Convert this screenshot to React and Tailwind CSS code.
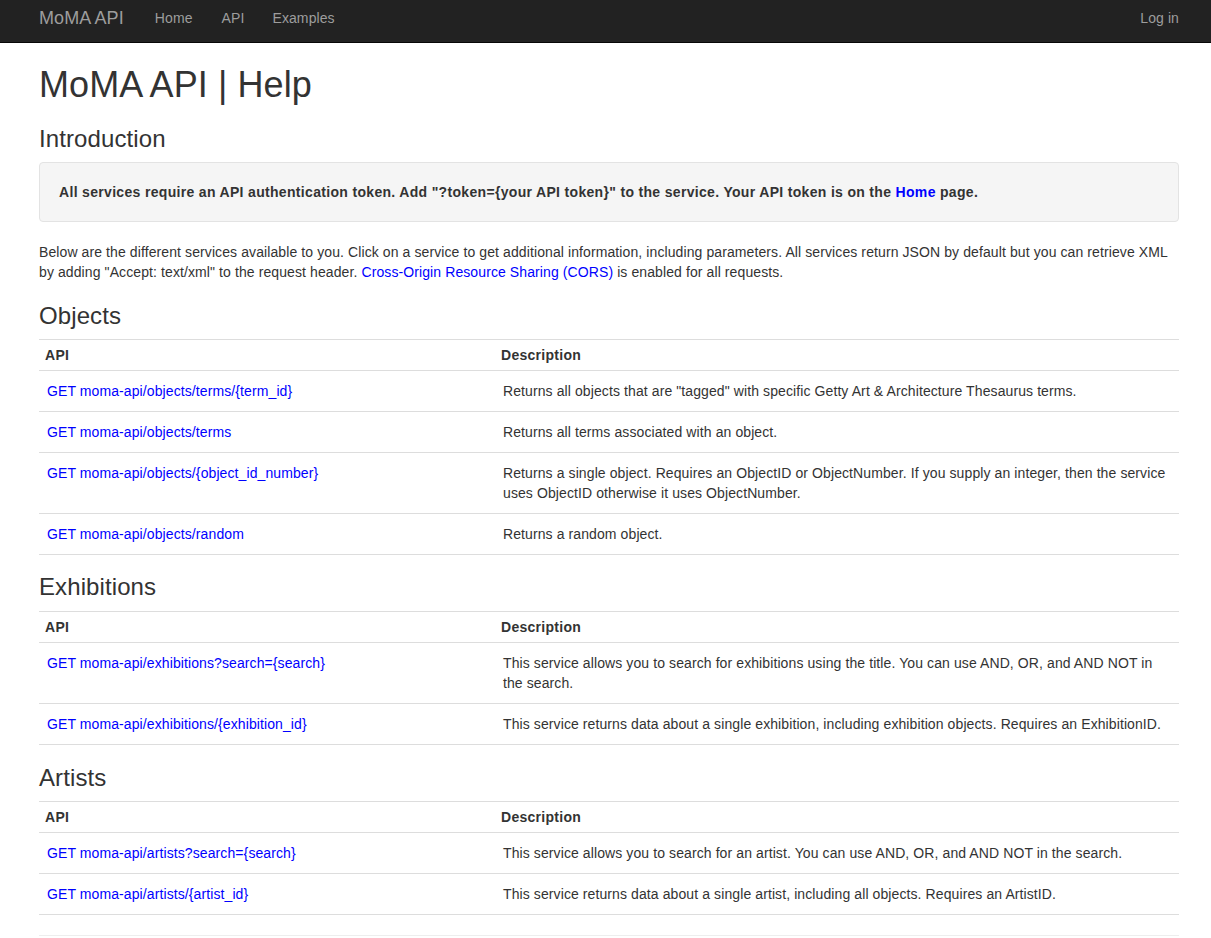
import React from 'react'

const SECTIONS = [
  {
    title: 'Objects',
    mt: 'mt-[21px]',
    rows: [
      ['GET moma-api/objects/terms/{term_id}', 'Returns all objects that are "tagged" with specific Getty Art & Architecture Thesaurus terms.'],
      ['GET moma-api/objects/terms', 'Returns all terms associated with an object.'],
      ['GET moma-api/objects/{object_id_number}', 'Returns a single object. Requires an ObjectID or ObjectNumber. If you supply an integer, then the service uses ObjectID otherwise it uses ObjectNumber.'],
      ['GET moma-api/objects/random', 'Returns a random object.'],
    ],
  },
  {
    title: 'Exhibitions',
    mt: '-mt-px',
    rows: [
      ['GET moma-api/exhibitions?search={search}', 'This service allows you to search for exhibitions using the title. You can use AND, OR, and AND NOT in the search.'],
      ['GET moma-api/exhibitions/{exhibition_id}', 'This service returns data about a single exhibition, including exhibition objects. Requires an ExhibitionID.'],
    ],
  },
  {
    title: 'Artists',
    mt: 'mt-px',
    rows: [
      ['GET moma-api/artists?search={search}', 'This service allows you to search for an artist. You can use AND, OR, and AND NOT in the search.'],
      ['GET moma-api/artists/{artist_id}', 'This service returns data about a single artist, including all objects. Requires an ArtistID.'],
    ],
  },
]

function Navbar() {
  return (
    <div className="h-[43px] bg-[#222] border-b border-[#080808]">
      <div className="ml-[39px] w-[1140px] flex items-start pt-2 text-[#9d9d9d]">
        <a className="text-[18px] leading-5">MoMA API</a>
        <nav className="flex ml-[31px] gap-[29px]">
          <a>Home</a>
          <a>API</a>
          <a className="-ml-px">Examples</a>
        </nav>
        <a className="ml-auto">Log in</a>
      </div>
    </div>
  )
}

function ServiceTable({ title, rows, mt }) {
  return (
    <>
      <h3 className={`text-[24px] leading-[26.4px] mb-[10px] ${mt}`}>{title}</h3>
      <table className="w-full border-collapse border-t border-[#ddd] mb-5">
        <thead>
          <tr className="border-b border-[#ddd]">
            <th className="w-[456px] text-left font-bold tracking-[0.02em] px-1.5 py-[5px]">API</th>
            <th className="text-left font-bold tracking-[0.02em] px-1.5 py-[5px]">Description</th>
          </tr>
        </thead>
        <tbody>
          {rows.map(([api, desc]) => (
            <tr key={api} className="border-b border-[#ddd]">
              <td className="align-top px-2 py-2.5">
                <a className="text-[#0000ff]">{api}</a>
              </td>
              <td className="align-top px-2 py-2.5">{desc}</td>
            </tr>
          ))}
        </tbody>
      </table>
    </>
  )
}

export default function App() {
  return (
    <div className="min-h-[938px] bg-white text-[14px] leading-5 tracking-[0.007em] text-[#333] font-['Liberation_Sans',Arial,sans-serif]">
      <Navbar />

      <div className="ml-[39px] w-[1140px]">
        <h1 className="text-[36px] leading-[39.6px] mt-[22px] mb-0">MoMA API | Help</h1>
        <h3 className="text-[24px] leading-[26.4px] mt-[21px] mb-[10px]">Introduction</h3>

        {/* Well */}
        <div className="bg-[#f5f5f5] border border-[#e3e3e3] rounded px-[19px] py-[19px] font-bold tracking-[0.023em]">
          All services require an API authentication token. Add "?token={'{your API token}'}" to the service. Your API token is on the{' '}
          <a className="text-[#0000ff]">Home</a> page.
        </div>

        <p className="mt-5 mb-0">
          Below are the different services available to you. Click on a service to get additional information, including parameters. All services return JSON by default but you can retrieve XML by adding "Accept: text/xml" to the request header.{' '}
          <a className="text-[#0000ff]">Cross-Origin Resource Sharing (CORS)</a> is enabled for all requests.
        </p>

        {SECTIONS.map(s => (
          <ServiceTable key={s.title} title={s.title} rows={s.rows} mt={s.mt} />
        ))}

        <hr className="border-0 border-t border-[#eee]" />
      </div>
    </div>
  )
}
